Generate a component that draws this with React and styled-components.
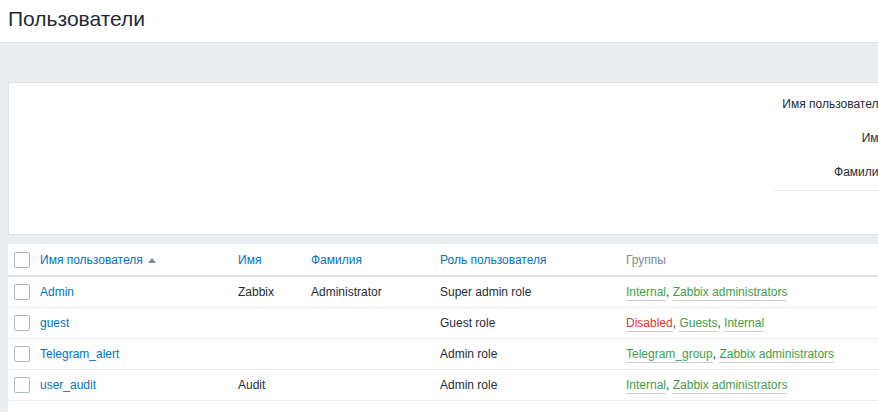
import React from "react";
import styled, { createGlobalStyle } from "styled-components";

const Global = createGlobalStyle`
  html, body { margin: 0; padding: 0; overflow: hidden; }
  body { background: #ebeef0; font-family: "Liberation Sans", Arial, sans-serif; font-size: 12px; color: #1f2c33; }
`;

const Page = styled.div`
  width: 1300px;
  min-height: 412px;
  background: #ebeef0;
`;

const Header = styled.header`
  height: 42px;
  background: #fff;
  border-bottom: 1px solid #dfe4e7;
  display: flex;
  align-items: center;
  padding-left: 8px;
`;

const Title = styled.h1`
  margin: 0;
  font-weight: normal;
  font-size: 21px;
  color: #1f2c33;
  line-height: 24px;
  margin-top: -4px;
`;

const Main = styled.main`
  padding: 39px 0 0 8px;
`;

const FilterBox = styled.section`
  background: #fff;
  border: 1px solid #dfe4e7;
  height: 153px;
  display: grid;
  grid-template-columns: 765px 1fr;
  padding-top: 4px;
  box-sizing: border-box;
`;

const FormCol = styled.div`
  display: flex;
  flex-direction: column;
`;

const FormRows = styled.div`
  border-bottom: 1px solid #ebeef0;
  padding-bottom: 1px;
`;

const FormRow = styled.div`
  height: 34px;
  display: flex;
  align-items: center;
`;

const Label = styled.label`
  width: 111px;
  text-align: right;
  white-space: nowrap;
  color: #1f2c33;
`;

const TableWrap = styled.div`
  margin-top: 9px;
  background: #fff;
  padding-bottom: 40px;
`;

const Table = styled.table`
  width: 100%;
  border-collapse: collapse;
  table-layout: fixed;
`;

const Th = styled.th`
  height: 31px;
  padding: 0 0 0 6px;
  text-align: left;
  font-weight: normal;
  border-bottom: 2px solid #dfe4e7;
  color: ${(p) => (p.$muted ? "#768d99" : "#0275b8")};
  white-space: nowrap;
`;

const Td = styled.td`
  height: 30px;
  padding: 0 0 0 6px;
  border-bottom: 1px solid #ebeef0;
  white-space: nowrap;
  color: #1f2c33;
`;

const Box = styled.span`
  display: block;
  width: 14px;
  height: 14px;
  border: 1px solid #acbbc2;
  border-radius: 2px;
  background: #fff;
`;

const Link = styled.a`
  color: #0275b8;
  text-decoration: none;
`;

const SortArrow = styled.span`
  display: inline-block;
  width: 0;
  height: 0;
  margin-left: 5px;
  border-left: 4px solid transparent;
  border-right: 4px solid transparent;
  border-bottom: 5px solid #768d99;
  vertical-align: 1px;
`;

const Group = styled.a`
  color: ${(p) => (p.$red ? "#e33734" : "#429e47")};
  text-decoration: none;
  border-bottom: 1px solid #c8d0d4;
  padding-bottom: 1px;
`;

const users = [
  { login: "Admin", name: "Zabbix", surname: "Administrator", role: "Super admin role", groups: [["Internal"], ["Zabbix administrators"]] },
  { login: "guest", name: "", surname: "", role: "Guest role", groups: [["Disabled", true], ["Guests"], ["Internal"]] },
  { login: "Telegram_alert", name: "", surname: "", role: "Admin role", groups: [["Telegram_group"], ["Zabbix administrators"]] },
  { login: "user_audit", name: "Audit", surname: "", role: "Admin role", groups: [["Internal"], ["Zabbix administrators"]] },
];

export default function App() {
  return (
    <Page>
      <Global />
      <Header>
        <Title>Пользователи</Title>
      </Header>
      <Main>
        <FilterBox>
          <div />
          <FormCol>
            <FormRows>
              <FormRow><Label>Имя пользователя</Label></FormRow>
              <FormRow><Label>Имя</Label></FormRow>
              <FormRow><Label>Фамилия</Label></FormRow>
            </FormRows>
          </FormCol>
        </FilterBox>
        <TableWrap>
          <Table>
            <colgroup>
              <col style={{ width: 26 }} />
              <col style={{ width: 198 }} />
              <col style={{ width: 73 }} />
              <col style={{ width: 129 }} />
              <col style={{ width: 186 }} />
              <col />
            </colgroup>
            <thead>
              <tr>
                <Th><Box /></Th>
                <Th>Имя пользователя<SortArrow /></Th>
                <Th>Имя</Th>
                <Th>Фамилия</Th>
                <Th>Роль пользователя</Th>
                <Th $muted>Группы</Th>
              </tr>
            </thead>
            <tbody>
              {users.map((u) => (
                <tr key={u.login}>
                  <Td><Box /></Td>
                  <Td><Link>{u.login}</Link></Td>
                  <Td>{u.name}</Td>
                  <Td>{u.surname}</Td>
                  <Td>{u.role}</Td>
                  <Td>
                    {u.groups.map(([g, red], i) => (
                      <React.Fragment key={g}>
                        {i > 0 && ", "}
                        <Group $red={red}>{g}</Group>
                      </React.Fragment>
                    ))}
                  </Td>
                </tr>
              ))}
            </tbody>
          </Table>
        </TableWrap>
      </Main>
    </Page>
  );
}
